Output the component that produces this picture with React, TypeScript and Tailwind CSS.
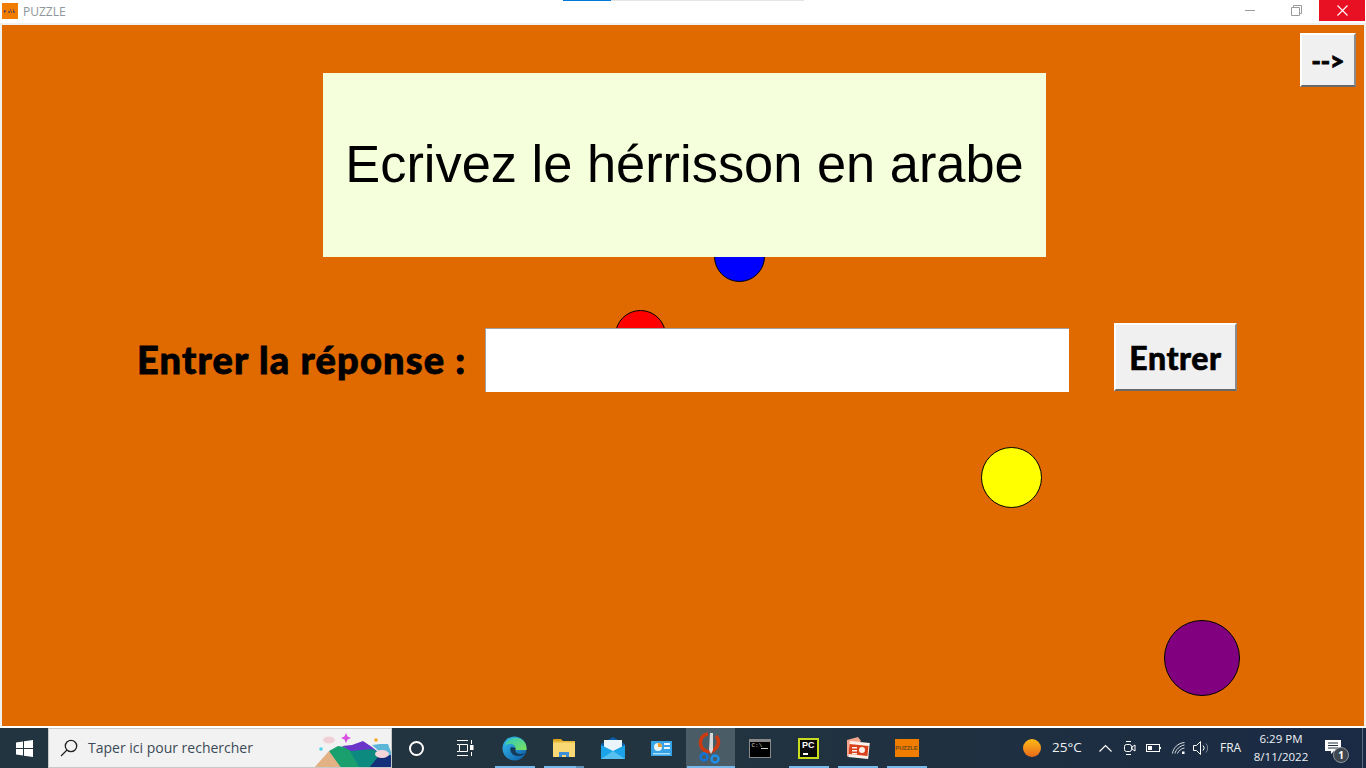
import React from "react";

const Slot = ({ children, line, active, split }: { children?: React.ReactNode; line?: string; active?: boolean; split?: boolean }) => (
  <div className={`relative h-full w-[49px] shrink-0 flex items-center justify-center ${active ? "bg-[#4a5d66]" : ""}`}>
    {children}
    {line === "app" && <div className="absolute bottom-0 left-[5px] right-[4px] h-[2px] bg-[#76b9ed]" />}
    {line === "full" && <div className="absolute bottom-0 left-[1px] right-0 h-[2px] bg-[#76b9ed]" />}
    {split && <div className="absolute bottom-0 right-[4px] w-[8px] h-[2px] bg-[#5a8fb8]" />}
  </div>
);

const Raised = "bg-[#f0f0f0] border-t-2 border-l-2 border-t-white border-l-white border-b-2 border-r-2 border-b-[#696969] border-r-[#8a8a8a]";

export default function App() {
  return (
    <div className="w-[1366px] h-[768px] overflow-hidden bg-white flex flex-col font-['Liberation_Sans',sans-serif]">
      {/* Title bar */}
      <div className="h-[23px] shrink-0 bg-white flex items-start relative">
        <div className="absolute top-0 left-[563px] w-[241px] h-px bg-[#e5e5e5]" />
        <div className="absolute top-0 left-[563px] w-[48px] h-px bg-[#0078d7]" />
        <div className="ml-[2px] mt-[3px] w-[16px] h-[16px] bg-[#f07c00] flex items-center justify-center">
          <svg width="14" height="6" viewBox="0 0 14 6">
            <path d="M1 3h2M1 4h1M5 4h2M7 2h1M8 4h1M10 2h1M10 4h2" stroke="#10247a" strokeWidth="1" />
          </svg>
        </div>
        <div className="ml-[5px] mt-[4px] text-[12px] leading-[15px] text-[#8e959c] font-['Open_Sans',sans-serif]">PUZZLE</div>
        <div className="ml-auto flex h-[21px]">
          <div className="w-[46px] flex items-center justify-center">
            <div className="w-[10px] h-px bg-[#9a9a9a]" />
          </div>
          <div className="w-[46px] flex items-center justify-center">
            <svg width="11" height="11" viewBox="0 0 11 11" fill="none" stroke="#9a9a9a">
              <path d="M0.5 2.5h8v8h-8zM2.5 2.5v-2h8v8h-2" />
            </svg>
          </div>
          <div className="w-[46px] bg-[#e81123] flex items-center justify-center">
            <svg width="11" height="11" viewBox="0 0 11 11" stroke="white" strokeWidth="1.1">
              <path d="M0.5 0.5l10 10M10.5 0.5l-10 10" />
            </svg>
          </div>
          <div className="w-[1px]" />
        </div>
      </div>

      {/* App window */}
      <div className="h-[703px] shrink-0 bg-[#f0f0f0] px-[2px] pt-[2px]">
        <div className="relative h-[701px] w-[1362px] bg-[#e06900]">
          <div className="absolute left-[712px] top-[205px] w-[51px] h-[52px] rounded-full bg-[#0000ff] border border-black" />
          <div className="absolute left-[613px] top-[285px] w-[51px] h-[52px] rounded-full bg-[#ff0000] border border-black" />
          <div className="absolute left-[979px] top-[422px] w-[61px] h-[61px] rounded-full bg-[#ffff00] border border-black" />
          <div className="absolute left-[1162px] top-[595px] w-[76px] h-[76px] rounded-full bg-[#800080] border border-black" />

          <div className="relative flex items-start">
            <div className="ml-[321px] mt-[48px] w-[723px] h-[184px] pb-[2px] bg-[#f5ffdc] flex items-center justify-center text-[52.4px] leading-none text-black whitespace-nowrap">
              Ecrivez le hérrisson en arabe
            </div>
            <div className={`ml-auto mr-[8px] mt-[8px] w-[56px] h-[54px] flex items-center justify-center ${Raised} font-['Lato',sans-serif] font-black text-[25px] leading-none text-black [-webkit-text-stroke:0.8px_black]`}>
              --&gt;
            </div>
          </div>

          <div className="relative flex items-start mt-[66px]">
            <div className="ml-[135px] w-[348px] h-[68px] flex items-center whitespace-nowrap font-['Lato',sans-serif] font-black text-[38px] tracking-[1.15px] leading-none text-black pt-[4px] [-webkit-text-stroke:0.8px_black]">
              Entrer la réponse :
            </div>
            <div className="mt-[5px] w-[584px] h-[64px] bg-white border-t border-l border-[#a0a0a0]" />
            <div className={`ml-[45px] w-[123px] h-[68px] pt-[2px] flex items-center justify-center ${Raised} font-['Lato',sans-serif] font-black text-[32px] tracking-[0.6px] leading-none text-black [-webkit-text-stroke:0.6px_black]`}>
              Entrer
            </div>
          </div>
        </div>
      </div>

      <div className="h-[2px] shrink-0 bg-white" />

      {/* Taskbar */}
      <div className="flex-1 min-h-0 flex items-center bg-gradient-to-r from-[#22343f] via-[#22343f] to-[#1a2a44] text-white font-['Open_Sans',sans-serif]">
        <div className="w-[48px] h-full flex items-center justify-center shrink-0">
          <svg width="17" height="17" viewBox="0 0 17 17" fill="white">
            <path d="M0 2.4l7-1v6.6H0zM8 1.2L17 0v8H8zM0 9h7v6.6l-7-1zM8 9h9v8l-9-1.2z" />
          </svg>
        </div>
        <div className="relative w-[344px] h-full shrink-0 bg-[#f2f2f2] border border-[#c8c8c8] flex items-center overflow-hidden">
          <svg className="ml-[11px]" width="18" height="18" viewBox="0 0 18 18" fill="none" stroke="#222" strokeWidth="1.3">
            <circle cx="11" cy="7" r="5.7" />
            <path d="M7 11l-6 6" />
          </svg>
          <span className="ml-[10px] text-[14px] leading-none text-[#3b4a57] whitespace-nowrap">Taper ici pour rechercher</span>
          <svg className="absolute right-0 top-0" width="79" height="40" viewBox="0 0 79 40">
            <path d="M1 40L17 22l9 5 8 13z" fill="#e2b184" />
            <path d="M17 22l9-5 12 2 12 21H30z" fill="#1aa06f" />
            <path d="M30 17l10-1 11-4 9 6 6 5-20 3z" fill="#6a35c8" />
            <path d="M60 16l8-1 8 0 3 8v10z" fill="#5cb6d8" />
            <path d="M38 22l22-2 19 8v12H48z" fill="#0d8a80" />
            <path d="M56 40l10-12 13-2v14z" fill="#14307a" />
            <ellipse cx="70" cy="25" rx="7" ry="4" fill="#f4d6da" />
            <ellipse cx="17" cy="11" rx="6" ry="3.500" fill="#efd0d6" />
            <path d="M34 4l1.600 3.400L39 9l-3.400 1.600L34 14l-1.600-3.400L29 9l3.400-1.600z" fill="#d94fe0" />
            <circle cx="64" cy="11" r="1.800" fill="#f2a81c" />
            <circle cx="9" cy="20" r="1.800" fill="#4fd4e8" />
          </svg>
        </div>

        <div className="flex h-full shrink-0">
          <Slot>
            <div className="w-[15px] h-[15px] rounded-full border-[2.5px] border-white" />
          </Slot>
          <Slot>
            <svg width="18" height="16" viewBox="0 0 18 16" fill="none" stroke="white">
              <path d="M0 .5h11M2.5 4.500h8v7h-8zM0 15.500h11M0 4.500h2M0 11.500h2M14.500 0v4M14.500 12v4" />
              <rect x="13" y="5" width="3.500" height="5" fill="white" stroke="none" />
            </svg>
          </Slot>
          <Slot line="app">
            <svg width="25" height="25" viewBox="0 0 25 25">
              <defs>
                <linearGradient id="e1" x1="0" y1="0" x2="1" y2="1">
                  <stop offset="0" stopColor="#35c1f1" />
                  <stop offset="1" stopColor="#0c59a4" />
                </linearGradient>
                <linearGradient id="e2" x1="0" y1="0" x2="1" y2="1">
                  <stop offset="0" stopColor="#2fc6c0" />
                  <stop offset="1" stopColor="#7be35c" />
                </linearGradient>
              </defs>
              <circle cx="12.500" cy="12.500" r="12" fill="url(#e1)" />
              <path d="M3 9C5 2 13 0 19 3c4 2 6 6 5.500 11H13c1-4-1-6-4-6-3 0-5 1-6 1z" fill="url(#e2)" />
              <path d="M9 11c-2 4 1 9 7 9 3 0 6-1 7-3-4 2-9 1-9.500-2-.3-2 .5-3 .5-3z" fill="#163a5a" />
            </svg>
          </Slot>
          <Slot line="app" split>
            <svg width="22" height="20" viewBox="0 0 22 20">
              <path d="M0 2a1 1 0 011-1h7l2 2H0z" fill="#d9a31d" />
              <rect x="0" y="3" width="22" height="16" fill="#f8d775" />
              <rect x="0" y="3" width="22" height="1.500" fill="#e8b93a" />
              <path d="M6 19v-5h10v5h-3v-2H9v2z" fill="#3f8fd8" />
            </svg>
          </Slot>
          <Slot>
            <svg width="24" height="22" viewBox="0 0 24 22">
              <path d="M0 7L12 0l12 7v15H0z" fill="#0a5fa8" />
              <path d="M3 3h18v9l-9 5-9-5z" fill="#e9f4fb" />
              <path d="M0 8l12 6 12-6v14H0z" fill="#1aa3e8" />
              <path d="M0 22l12-8 12 8z" fill="#56c0f0" />
            </svg>
          </Slot>
          <Slot>
            <svg width="21" height="15" viewBox="0 0 21 15">
              <rect width="21" height="15" fill="#36a3e8" />
              <circle cx="7" cy="6" r="4" fill="#e9f4fb" />
              <path d="M7 6V2a4 4 0 014 4z" fill="#e8a030" />
              <rect x="13" y="2" width="6" height="2" fill="#e9f4fb" />
              <rect x="13" y="6" width="6" height="2" fill="#e9f4fb" />
              <rect x="2" y="12" width="17" height="1.500" fill="#a9def8" />
            </svg>
          </Slot>
          <Slot active line="full">
            <svg width="26" height="34" viewBox="0 0 26 34" fill="none">
              <path d="M10 3C2 4 0 14 6 19c3 2 7 2 10 0 5-4 6-10 2-14" stroke="#cc3a12" strokeWidth="3.500" />
              <path d="M12 2l-1 17 2 4 2-4V2z" fill="#d5d9dc" />
              <circle cx="6" cy="26" r="3.500" stroke="#1473d8" strokeWidth="2.500" />
              <circle cx="17" cy="28" r="3.500" stroke="#1e8fe8" strokeWidth="2.500" />
            </svg>
          </Slot>
          <Slot>
            <div className="w-[22px] h-[19px] bg-black border border-[#8a8a8a] relative border-t-[3px]">
              <span className="absolute left-[2px] top-0 text-[6px] leading-[8px] font-['Liberation_Mono',monospace] text-[#d0d0d0]">C:\</span>
              <div className="absolute left-[11px] top-[6px] w-[7px] h-px bg-[#d0d0d0]" />
            </div>
          </Slot>
          <Slot line="app">
            <div className="w-[21px] h-[21px] bg-[#0b0b0b] border-[2px] border-[#c9dc1e] relative">
              <span className="absolute left-[2px] top-[0px] text-[9px] leading-[11px] font-bold text-white font-['Liberation_Sans',sans-serif]">PC</span>
              <div className="absolute left-[3px] bottom-[2px] w-[5px] h-[2px] bg-white" />
            </div>
          </Slot>
          <Slot line="app">
            <svg width="24" height="22" viewBox="0 0 24 22">
              <path d="M1 3l11-3 3 4-14 16z" fill="#f4a78c" />
              <rect x="3" y="5" width="20" height="16" transform="rotate(6 13 13)" fill="#fdf1ea" />
              <rect x="3" y="8" width="19" height="10" transform="rotate(6 13 13)" fill="#d9421c" />
              <circle cx="16" cy="13" r="3" fill="#fdf1ea" />
              <rect x="6" y="10" width="5" height="1.500" fill="#fdf1ea" />
              <rect x="6" y="13" width="5" height="1.500" fill="#fdf1ea" />
              <rect x="6" y="16" width="5" height="1.500" fill="#fdf1ea" />
            </svg>
          </Slot>
          <Slot line="app">
            <div className="w-[24px] h-[18px] bg-[#f07c00] flex items-center justify-center text-[6px] leading-none font-bold text-[#6e4a1c] font-['Liberation_Sans',sans-serif] tracking-tight">
              PUZZLE
            </div>
          </Slot>
        </div>

        <div className="ml-auto flex h-full items-center shrink-0">
          <div className="w-[18px] h-[18px] rounded-full bg-gradient-to-b from-[#fdb913] to-[#e8691a]" />
          <span className="ml-[11px] w-[42px] text-[13.5px] leading-none whitespace-nowrap text-[#eef1f4]">25°C</span>
          <svg className="ml-[5px]" width="13" height="8" viewBox="0 0 13 8" fill="none" stroke="white" strokeWidth="1.200">
            <path d="M.5 7.500l6-6 6 6" />
          </svg>
          <svg className="ml-[12px]" width="12" height="16" viewBox="0 0 12 16" fill="none" stroke="white">
            <rect x=".5" y="4.500" width="7" height="7" rx="2" />
            <path d="M8 7l3-2v6l-3-2zM2 1.500h5M2 14.500h5" />
          </svg>
          <svg className="ml-[10px]" width="15" height="8" viewBox="0 0 15 8" fill="none" stroke="white">
            <rect x=".5" y=".5" width="13" height="7" />
            <rect x="2" y="2" width="4" height="4" fill="white" stroke="none" />
            <rect x="14" y="3" width="1" height="2" fill="white" stroke="none" />
          </svg>
          <svg className="ml-[11px]" width="13" height="12" viewBox="0 0 13 12" fill="none" stroke="#d8dde2">
            <path d="M.5 11.500C1 6 6 1 12.500.5M3 11.500C3.500 8 8 3.500 12.500 3M5.500 11.500C6 9.500 9.500 6 12.500 6" />
            <rect x="10" y="9.500" width="2.500" height="2.500" fill="white" stroke="none" />
          </svg>
          <svg className="ml-[8px]" width="17" height="14" viewBox="0 0 17 14" fill="none" stroke="white">
            <path d="M.5 4.500h3l4-4v13l-4-4h-3z" />
            <path d="M10 4.500a3.500 3.500 0 010 5" />
            <path d="M13 2.500a7 7 0 010 9" stroke="#7f8a94" />
          </svg>
          <span className="ml-[10px] w-[21px] text-[12px] leading-none text-[#eef1f4]">FRA</span>
          <div className="ml-[8px] w-[64px] flex flex-col items-center text-[11.5px] leading-[18px] text-[#eef1f4] whitespace-nowrap">
            <span>6:29 PM</span>
            <span>8/11/2022</span>
          </div>
          <div className="w-[49px] h-full relative">
            <svg className="absolute left-[12px] top-[12px]" width="16" height="15" viewBox="0 0 16 15">
              <path d="M0 0h16v11H9l-3 3v-3H0z" fill="white" />
              <path d="M3 3h10M3 5.500h10M3 8h10" stroke="#22303f" />
            </svg>
            <div className="absolute left-[20px] top-[19px] w-[16px] h-[16px] rounded-full bg-[#3e4750] border border-[#8d949b] flex items-center justify-center text-[10px] leading-none font-bold">1</div>
          </div>
          <div className="w-px h-full bg-[#5c6b7a]" />
          <div className="w-[3px]" />
        </div>
      </div>
    </div>
  );
}
